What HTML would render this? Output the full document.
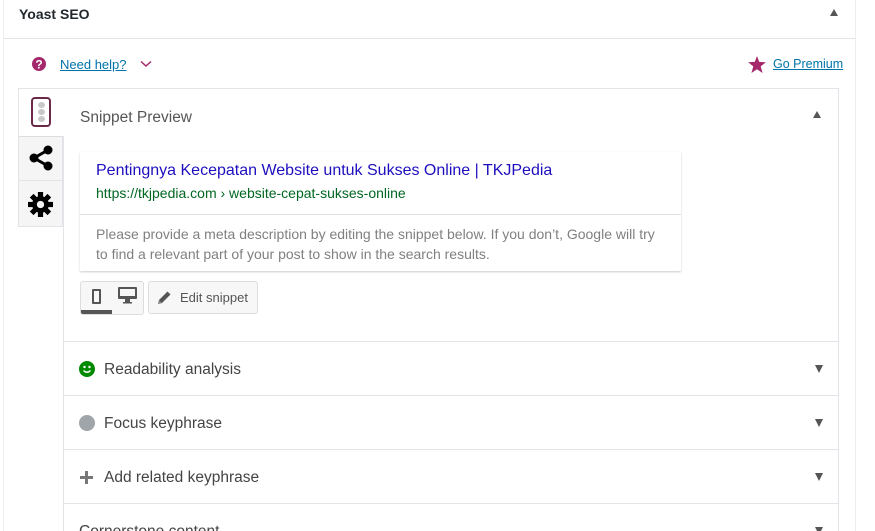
<!DOCTYPE html>
<html style="overflow:hidden;height:531px"><head><meta charset="utf-8"><style>
*{box-sizing:border-box;margin:0;padding:0}
body{width:875px;height:531px;overflow:hidden;background:#fff;font-family:"Liberation Sans",sans-serif;position:relative}
.a{position:absolute}
.row{position:absolute;left:63px;width:776px;height:54px;border-top:1px solid #e2e4e7}
.row .t{position:absolute;left:41px;top:19px;font-size:15.5px;color:#444}
.row .arr{position:absolute;right:16px;top:23px;width:0;height:0;border-left:4.5px solid transparent;border-right:4.5px solid transparent;border-top:8px solid #555}
</style></head><body>
<div class="a" style="left:3px;top:0;width:853px;height:531px;border-left:1px solid #eee;border-right:1px solid #eee"></div>
<div class="a" style="left:4px;top:38px;width:851px;height:1px;background:#e2e4e7"></div>
<div class="a" style="left:19px;top:6px;font-size:14px;font-weight:bold;color:#23282d">Yoast SEO</div>
<div class="a" style="left:830px;top:9px;border-left:4.5px solid transparent;border-right:4.5px solid transparent;border-bottom:7px solid #555"></div>

<svg class="a" style="left:32px;top:57px" width="14" height="14" viewBox="0 0 14 14"><circle cx="7" cy="7" r="7" fill="#a4286a"/><text x="7" y="11.5" font-size="12" font-weight="bold" fill="#fff" text-anchor="middle" font-family="Liberation Sans">?</text></svg>
<div class="a" style="left:60px;top:57px;font-size:13px;color:#0073aa;text-decoration:underline">Need help?</div>
<svg class="a" style="left:140px;top:60px" width="12" height="8" viewBox="0 0 12 8"><path d="M1 1.5 L6 6 L11 1.5" stroke="#a4286a" stroke-width="1.5" fill="none"/></svg>
<svg class="a" style="left:748px;top:56px" width="18" height="17" viewBox="0 0 24 23"><path d="M12 0 L15 8 L24 8.5 L17 14 L19.5 23 L12 18 L4.5 23 L7 14 L0 8.5 L9 8 Z" fill="#a4286a"/></svg>
<div class="a" style="left:773px;top:57px;font-size:12.5px;color:#0073aa;text-decoration:underline">Go Premium</div>

<div class="a" style="left:63px;top:88px;width:776px;height:443px;border:1px solid #e2e4e7;border-bottom:none"></div>
<div class="a" style="left:18px;top:88px;width:46px;height:48px;background:#fff;border:1px solid #e2e4e7;border-right:none;border-bottom:none"></div>
<div class="a" style="left:18px;top:136px;width:45px;height:45px;background:#f5f5f5;border:1px solid #e2e4e7;border-top:1px solid #ddd"></div>
<div class="a" style="left:18px;top:181px;width:45px;height:46px;background:#f5f5f5;border:1px solid #e2e4e7;border-top:none"></div>
<div class="a" style="left:31px;top:97px;width:20px;height:30px;border:2px solid #6b2a4a;border-radius:4px;background:#fff"></div>
<div class="a" style="left:37.5px;top:102px;width:7px;height:6px;border-radius:50%;background:#c8c8c8"></div>
<div class="a" style="left:37.5px;top:109px;width:7px;height:6px;border-radius:50%;background:#c8c8c8"></div>
<div class="a" style="left:37.5px;top:116px;width:7px;height:6px;border-radius:50%;background:#c8c8c8"></div>
<svg class="a" style="left:29px;top:145px" width="24" height="26" viewBox="0 0 24 26"><line x1="19" y1="5" x2="5" y2="13" stroke="#000" stroke-width="3"/><line x1="19" y1="21" x2="5" y2="13" stroke="#000" stroke-width="3"/><circle cx="19" cy="5" r="4.5"/><circle cx="19" cy="21" r="4.5"/><circle cx="5" cy="13" r="4.5"/></svg>
<svg class="a" style="left:28px;top:192px" width="25" height="25" viewBox="0 0 24 24"><g fill="#000"><circle cx="12" cy="12" r="8"/><rect x="9.5" y="0" width="5" height="24"/><rect x="0" y="9.5" width="24" height="5"/><rect x="9.5" y="0" width="5" height="24" transform="rotate(45 12 12)"/><rect x="9.5" y="0" width="5" height="24" transform="rotate(-45 12 12)"/></g><circle cx="12" cy="12" r="3.5" fill="#f5f5f5"/></svg>

<div class="a" style="left:80px;top:109px;font-size:15.5px;color:#555">Snippet Preview</div>
<div class="a" style="left:813px;top:111px;border-left:4.5px solid transparent;border-right:4.5px solid transparent;border-bottom:7px solid #555"></div>

<div class="a" style="left:80px;top:152px;width:601px;height:119px;background:#fff;box-shadow:0 1px 2px rgba(0,0,0,.2)"></div>
<div class="a" style="left:80px;top:214px;width:601px;height:1px;background:#e0e0e0"></div>
<div class="a" style="left:96px;top:162px;font-size:16px;color:#1e0fbe">Pentingnya Kecepatan Website untuk Sukses Online | TKJPedia</div>
<div class="a" style="left:96px;top:185px;font-size:14px;color:#006621">https://tkjpedia.com › website-cepat-sukses-online</div>
<div class="a" style="left:96px;top:224px;font-size:14px;color:#808080;line-height:20px;width:565px">Please provide a meta description by editing the snippet below. If you don’t, Google will try to find a relevant part of your post to show in the search results.</div>

<div class="a" style="left:80px;top:281px;width:64px;height:34px;background:#f7f7f7;border:1px solid #ddd;border-radius:3px;overflow:hidden"><div class="a" style="left:0;bottom:0;width:31px;height:4px;background:#555"></div></div>
<div class="a" style="left:92px;top:289px;width:9px;height:15px;border:2px solid #555;border-radius:1px"></div>
<svg class="a" style="left:118px;top:287px" width="19" height="17" viewBox="0 0 19 17"><rect x="0" y="0" width="19" height="12" rx="1" fill="#555"/><rect x="2" y="2" width="15" height="7" fill="#f7f7f7"/><rect x="7" y="12" width="5" height="3" fill="#555"/><rect x="5" y="15" width="9" height="1.5" fill="#555"/></svg>
<div class="a" style="left:148px;top:281px;width:110px;height:33px;background:#f7f7f7;border:1px solid #ddd;border-radius:3px"></div>
<svg class="a" style="left:157px;top:290px" width="15" height="15" viewBox="0 0 15 15"><path d="M1 14 L2 10 L10.5 1.5 L13.5 4.5 L5 13 Z" fill="#555"/><path d="M1 14 L2 10 L5 13 Z" fill="#888"/></svg>
<div class="a" style="left:180px;top:290px;font-size:13px;color:#555">Edit snippet</div>

<div class="row" style="top:341px"><svg class="a" style="left:16px;top:19px" width="16" height="16" viewBox="0 0 16 16"><circle cx="8" cy="8" r="8" fill="#008a00"/><circle cx="5.5" cy="6" r="1.2" fill="#fff"/><circle cx="10.5" cy="6" r="1.2" fill="#fff"/><path d="M4.5 9.5 Q8 13 11.5 9.5" stroke="#fff" stroke-width="1.4" fill="none"/></svg><div class="t">Readability analysis</div><div class="arr"></div></div>
<div class="row" style="top:395px"><div class="a" style="left:16px;top:19px;width:16px;height:16px;border-radius:50%;background:#a0a5aa"></div><div class="t">Focus keyphrase</div><div class="arr"></div></div>
<div class="row" style="top:449px"><div class="a" style="left:17px;top:26px;width:13px;height:3px;background:#777"></div><div class="a" style="left:22px;top:21px;width:3px;height:13px;background:#777"></div><div class="t">Add related keyphrase</div><div class="arr"></div></div>
<div class="row" style="top:503px"><div class="t" style="left:16px">Cornerstone content</div><div class="arr"></div></div>
</body></html>
